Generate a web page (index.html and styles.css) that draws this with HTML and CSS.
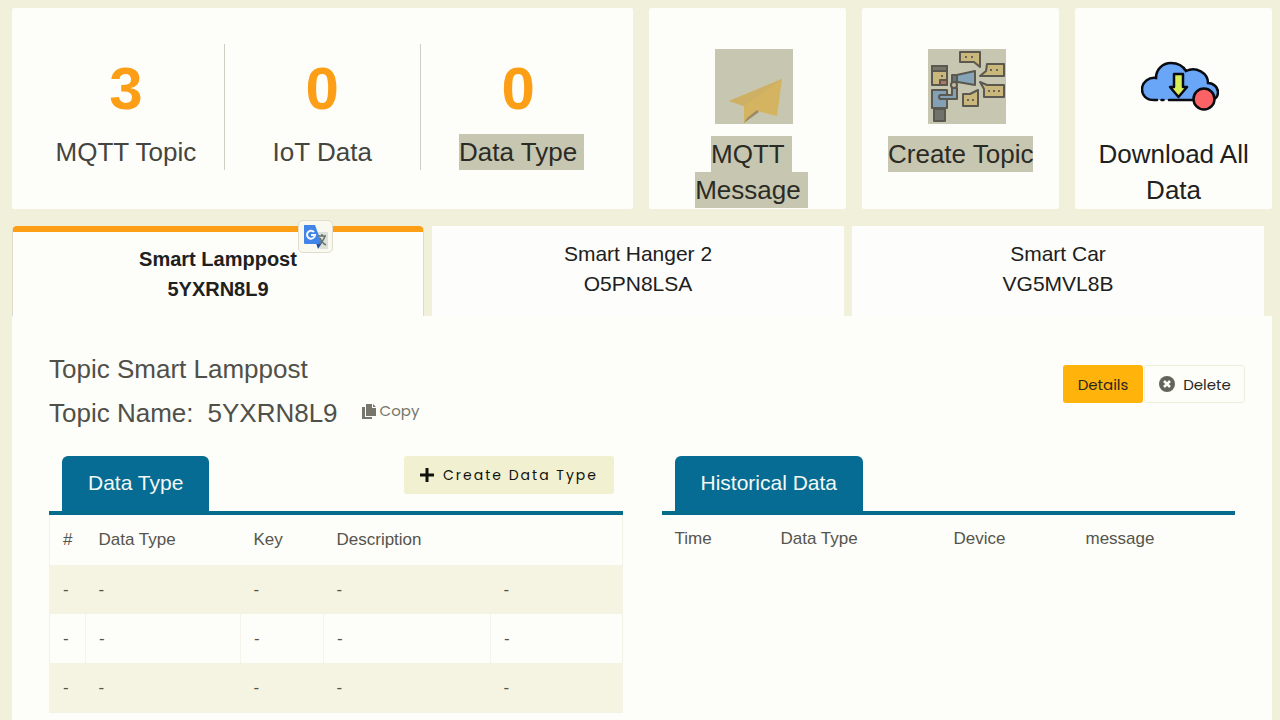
FILE: index.html
```html
<!DOCTYPE html>
<html lang="en">
<head>
<meta charset="utf-8">
<meta name="viewport" content="width=device-width, initial-scale=1">
<title>IoT Dashboard</title>
<link rel="stylesheet" href="styles.css">
</head>
<body>
<main class="page">
  <section class="summary">
    <div class="card stats">
      <div class="stat"><strong class="stat-value">3</strong><span>MQTT Topic</span></div>
      <div class="stat"><strong class="stat-value">0</strong><span>IoT Data</span></div>
      <div class="stat"><strong class="stat-value">0</strong><span class="selected">Data Type</span></div>
    </div>
    <a class="card action" href="#message">
      <svg class="action-icon selected-box" viewBox="0 0 78 75" aria-hidden="true">
        <path d="M14 52 67 30 62 67 42 62 29 74V57Z" fill="#d4b460"/>
        <path d="M14 52 67 30 29 57Z" fill="#cdb064"/>
        <path d="M29 74 32 69 42 61 44 63Z" fill="#9c8a66"/>
      </svg>
      <span class="selected">MQTT</span>
      <span class="selected">Message</span>
    </a>
    <a class="card action" href="#create">
      <svg class="action-icon selected-box" viewBox="0 0 78 75" aria-hidden="true">
        <g stroke="#5b5850" stroke-width="2" stroke-linejoin="round">
          <g fill="#c9b77c">
            <path d="M32 3H52V18L46 13H32Z"/>
            <path d="M59 15H76V27H52L58 22Z"/>
            <path d="M52 33 59 36H76V48H56V40Z"/>
            <path d="M35 45H42L50 41V57H35Z"/>
            <path d="M4 17H19V36H4Z"/>
          </g>
          <path d="M4 17H19V22H4Z" fill="#777568"/>
          <path d="M19 31H12V36H19Z" fill="#b77362"/>
          <path d="M24 27 47 22V36L24 32Z" fill="#85a4b8"/>
          <path d="M24 26H29V33H24Z" fill="#66767c"/>
          <path d="M4 41H19V46H24V39H29V50H19V59H4Z" fill="#82a0b6"/>
          <path d="M6 60H17V72H6Z" fill="#70716a"/>
          <circle cx="26" cy="36" r="3" fill="#c4bda3"/>
          <path d="M19 46H12Q10 48 12 50H19" fill="none"/>
        </g>
        <g fill="#4b4946">
          <circle cx="38" cy="8" r="1"/><circle cx="44" cy="8" r="1"/>
          <circle cx="63" cy="21" r="1"/><circle cx="69" cy="21" r="1"/>
          <circle cx="61" cy="42" r="1"/><circle cx="66" cy="42" r="1"/><circle cx="71" cy="42" r="1"/>
          <circle cx="40" cy="51" r="1"/><circle cx="45" cy="51" r="1"/>
          <circle cx="14" cy="27" r="1"/>
        </g>
      </svg>
      <span class="selected tight">Create Topic</span>
    </a>
    <a class="card action" href="#download">
      <svg class="action-icon" viewBox="0 0 78 75" aria-hidden="true">
        <path d="M14 51C5 51 1 46 1 40.500C1 33 8 28 15 29C15 20 22 14 30 14C37 14 42 17 45 22C55 17 67 24 67 34C73 34 77 39 77 43C77 48 74 51 69 51Z" fill="#69a6f8"/>
        <path d="M16 51H13C5 51 1 46 1 40.500C1 33 8 28 15 29C15 20 22 14 30 14C37 14 42 17 45 22C55 17 67 24 67 34C73 34 77 39 77 43C77 48 74 51 69 51H28M20.500 51H22.500" fill="none" stroke="#080b10" stroke-width="2.500" stroke-linecap="round"/>
        <path d="M33 25H42V38H46L37.500 48 29 38H33Z" fill="#d8ed58" stroke="#080b10" stroke-width="2.500" stroke-linejoin="round"/>
        <circle cx="63" cy="50" r="10.500" fill="#fb6266" stroke="#080b10" stroke-width="2.500"/>
      </svg>
      <span>Download All</span>
      <span>Data</span>
    </a>
  </section>

  <nav class="topics">
    <button class="topic active" type="button"><span>Smart Lamppost</span><span>5YXRN8L9</span></button>
    <button class="topic" type="button"><span>Smart Hanger 2</span><span>O5PN8LSA</span></button>
    <button class="topic" type="button"><span>Smart Car</span><span>VG5MVL8B</span></button>
    <button class="translate" type="button" aria-label="Translate">
      <svg viewBox="0 0 26 26" aria-hidden="true">
        <path d="M11 8H24Q25 8 25 9V24Q25 25 24 25H17Z" fill="#dddfd9"/>
        <path d="M13 19H19L15 25Z" fill="#284f9b"/>
        <path d="M1 1H12L19 20H2Q1 20 1 19Z" fill="#4384e8"/>
        <path d="M11 8A4 4 0 1 0 12 11H8" fill="none" stroke="#f6f8fb" stroke-width="2"/>
        <path d="M15 12H23M19 10V12M22 12Q20 18 16 20M17 14Q19 19 23 21" fill="none" stroke="#65716e" stroke-width="1.500"/>
      </svg>
    </button>
  </nav>

  <section class="panel">
    <header class="panel-head">
      <div>
        <h1 class="topic-title">Topic Smart Lamppost</h1>
        <div class="topic-name">
          <span>Topic Name:</span><span>5YXRN8L9</span>
          <button class="copy" type="button">
            <svg class="copy-icon" viewBox="0 0 16 17" aria-hidden="true"><path d="M5 1H11V5H15V13H5ZM12 1 15 4H12ZM1 4H4V14H11V16H1Z" fill="currentColor"/></svg>
            Copy
          </button>
        </div>
      </div>
      <div class="tools">
        <button class="tool details" type="button">Details</button>
        <button class="tool delete" type="button">
          <svg class="delete-icon" viewBox="0 0 18 18" aria-hidden="true"><circle cx="9" cy="9" r="8" fill="#65645c"/><path d="M6 6 12 12M12 6 6 12" stroke="#fdfdf8" stroke-width="2.500"/></svg>
          Delete
        </button>
      </div>
    </header>

    <div class="columns">
      <section>
        <div class="section-bar">
          <h2 class="section-tab">Data Type</h2>
          <button class="create" type="button">
            <svg class="plus-icon" viewBox="0 0 16 16" aria-hidden="true"><path d="M8 1V15M1 8H15" stroke="currentColor" stroke-width="3"/></svg>
            Create Data Type
          </button>
        </div>
        <table class="data types">
          <colgroup><col class="c-num"><col class="c-type"><col class="c-key"><col class="c-desc"><col></colgroup>
          <thead><tr><th>#</th><th>Data Type</th><th>Key</th><th>Description</th><th></th></tr></thead>
          <tbody>
            <tr><td>-</td><td>-</td><td>-</td><td>-</td><td>-</td></tr>
            <tr><td>-</td><td>-</td><td>-</td><td>-</td><td>-</td></tr>
            <tr><td>-</td><td>-</td><td>-</td><td>-</td><td>-</td></tr>
          </tbody>
        </table>
      </section>
      <section>
        <div class="section-bar">
          <h2 class="section-tab">Historical Data</h2>
        </div>
        <table class="data history">
          <colgroup><col class="h-time"><col class="h-type"><col class="h-device"><col></colgroup>
          <thead><tr><th>Time</th><th>Data Type</th><th>Device</th><th>message</th></tr></thead>
        </table>
      </section>
    </div>
  </section>
</main>
</body>
</html>
```

FILE: styles.css
```css
* { box-sizing: border-box; }

body {
  margin: 0;
  background: #f1f0da;
  color: #45453f;
  font-family: "Liberation Sans", Arial, sans-serif;
}

button { font: inherit; color: inherit; border: 0; cursor: pointer; }

.page {
  min-height: 100vh;
  display: flex;
  flex-direction: column;
  padding: 8px 8px 0 12px;
}

.summary {
  display: grid;
  grid-template-columns: 622fr 197fr 197fr 197fr;
  gap: 16px;
  font-size: 26px;
  line-height: 36px;
}

.card { background: #fdfdf9; border-radius: 2px; }

.stats {
  display: grid;
  grid-template-columns: repeat(3, 1fr);
  padding: 36px 18px 39px 16px;
}

.stat { display: flex; flex-direction: column; align-items: center; }
.stat + .stat { border-left: 1px solid #cfcec2; }
.stat-value { color: #fd9f16; font-size: 60px; line-height: 90px; }

.selected {
  background: #c7c6b0;
  color: #2b2b25;
  padding-right: 7px;
  margin-right: -7px;
}
.selected.tight { padding-right: 0; margin-right: 0; }
.selected-box { background: #c7c6b0; }

.action {
  display: flex;
  flex-direction: column;
  align-items: center;
  padding-top: 41px;
  color: #20201c;
  text-decoration: none;
  white-space: nowrap;
}

.action-icon { width: 78px; height: 75px; margin: 0 0 12px 12px; }

.topics {
  position: relative;
  display: grid;
  grid-template-columns: repeat(3, 1fr);
  gap: 8px;
  margin-top: 17px;
  padding-right: 8px;
}

.topic {
  display: flex;
  flex-direction: column;
  align-items: center;
  padding: 13px 8px 17px;
  background: #fdfdfb;
  color: #20201c;
  font-size: 21px;
  line-height: 30px;
}

.topic.active {
  padding: 12px 8px;
  border: 1px solid #dddccb;
  border-top: 6px solid #fd9f16;
  border-bottom: 0;
  border-radius: 5px 5px 0 0;
  background: #fdfdf9;
  font-weight: bold;
  font-size: 20px;
}

.translate {
  position: absolute;
  top: -6px;
  left: 286px;
  width: 35px;
  height: 33px;
  padding: 3px 4px;
  background: #f9f9ef;
  border: 1px solid #deddce;
  border-radius: 5px;
}

.translate svg { display: block; width: 26px; height: 26px; }

.panel { flex: 1; background: #fdfdf9; padding: 35px 27px 7px 37px; }

.panel-head {
  display: flex;
  justify-content: space-between;
  align-items: center;
  color: #505049;
}

.topic-title {
  margin: 0 0 8px;
  font-size: 26px;
  line-height: 36px;
  font-weight: normal;
}

.topic-name {
  display: flex;
  align-items: flex-start;
  gap: 14px;
  font-size: 26px;
  line-height: 36px;
}

.copy {
  display: flex;
  align-items: center;
  gap: 3px;
  margin-left: 9px;
  padding: 6px 0;
  background: none;
  color: #77766c;
  font-family: Poppins, Inter, sans-serif;
  font-size: 15px;
  line-height: 20px;
}

.copy-icon { width: 16px; height: 17px; }

.tools { display: flex; gap: 1px; margin-bottom: 14px; }

.tool {
  height: 38px;
  padding: 0 14px;
  border-radius: 3px;
  color: #292721;
  font-family: Poppins, Inter, sans-serif;
  font-size: 15px;
}

.details { width: 80px; background: #ffb30b; }

.delete {
  display: flex;
  align-items: center;
  justify-content: center;
  gap: 7px;
  width: 101px;
  padding: 0;
  background: #fdfdf9;
  border: 1px solid #efeedd;
}

.delete-icon { width: 18px; height: 18px; }

.columns {
  display: grid;
  grid-template-columns: 1fr 1fr;
  gap: 39px;
  margin: 25px 10px 0 0;
}

.section-bar {
  display: flex;
  justify-content: space-between;
  align-items: flex-start;
  padding: 0 9px 0 13px;
  border-bottom: 4px solid #066c8c;
}

.section-tab {
  margin: 0;
  padding: 12px 26px 13px;
  border-radius: 6px 6px 0 0;
  background: #066c94;
  color: #f3f8f5;
  font-size: 21px;
  line-height: 30px;
  font-weight: normal;
}

.create {
  display: flex;
  align-items: center;
  justify-content: center;
  gap: 8px;
  width: 210px;
  height: 38px;
  padding: 0;
  border-radius: 3px;
  background: #f1f0d0;
  color: #11110e;
  font-family: Poppins, Inter, sans-serif;
  font-size: 14px;
  letter-spacing: 2px;
  white-space: nowrap;
}

.plus-icon { width: 16px; height: 16px; flex: none; }

.data {
  width: 100%;
  table-layout: fixed;
  border-collapse: collapse;
  color: #55554d;
  font-size: 17px;
  line-height: 24px;
}

.data th, .data td { padding: 13px 0 12px 13px; text-align: left; font-weight: normal; }
.data th { padding: 12px 0 13px 13px; }
.types { border: 1px solid #f3f2e6; border-top: 0; }
.types th { padding-top: 13px; }
.types tbody tr:nth-child(odd) { background: #f5f4e2; }
.types tbody tr:nth-child(even) td + td { border-left: 1px solid #f5f4ea; }

.c-num { width: 36px; }
.c-type { width: 155px; }
.c-key { width: 83px; }
.c-desc { width: 167px; }
.h-time { width: 106px; }
.h-type { width: 173px; }
.h-device { width: 132px; }
```
